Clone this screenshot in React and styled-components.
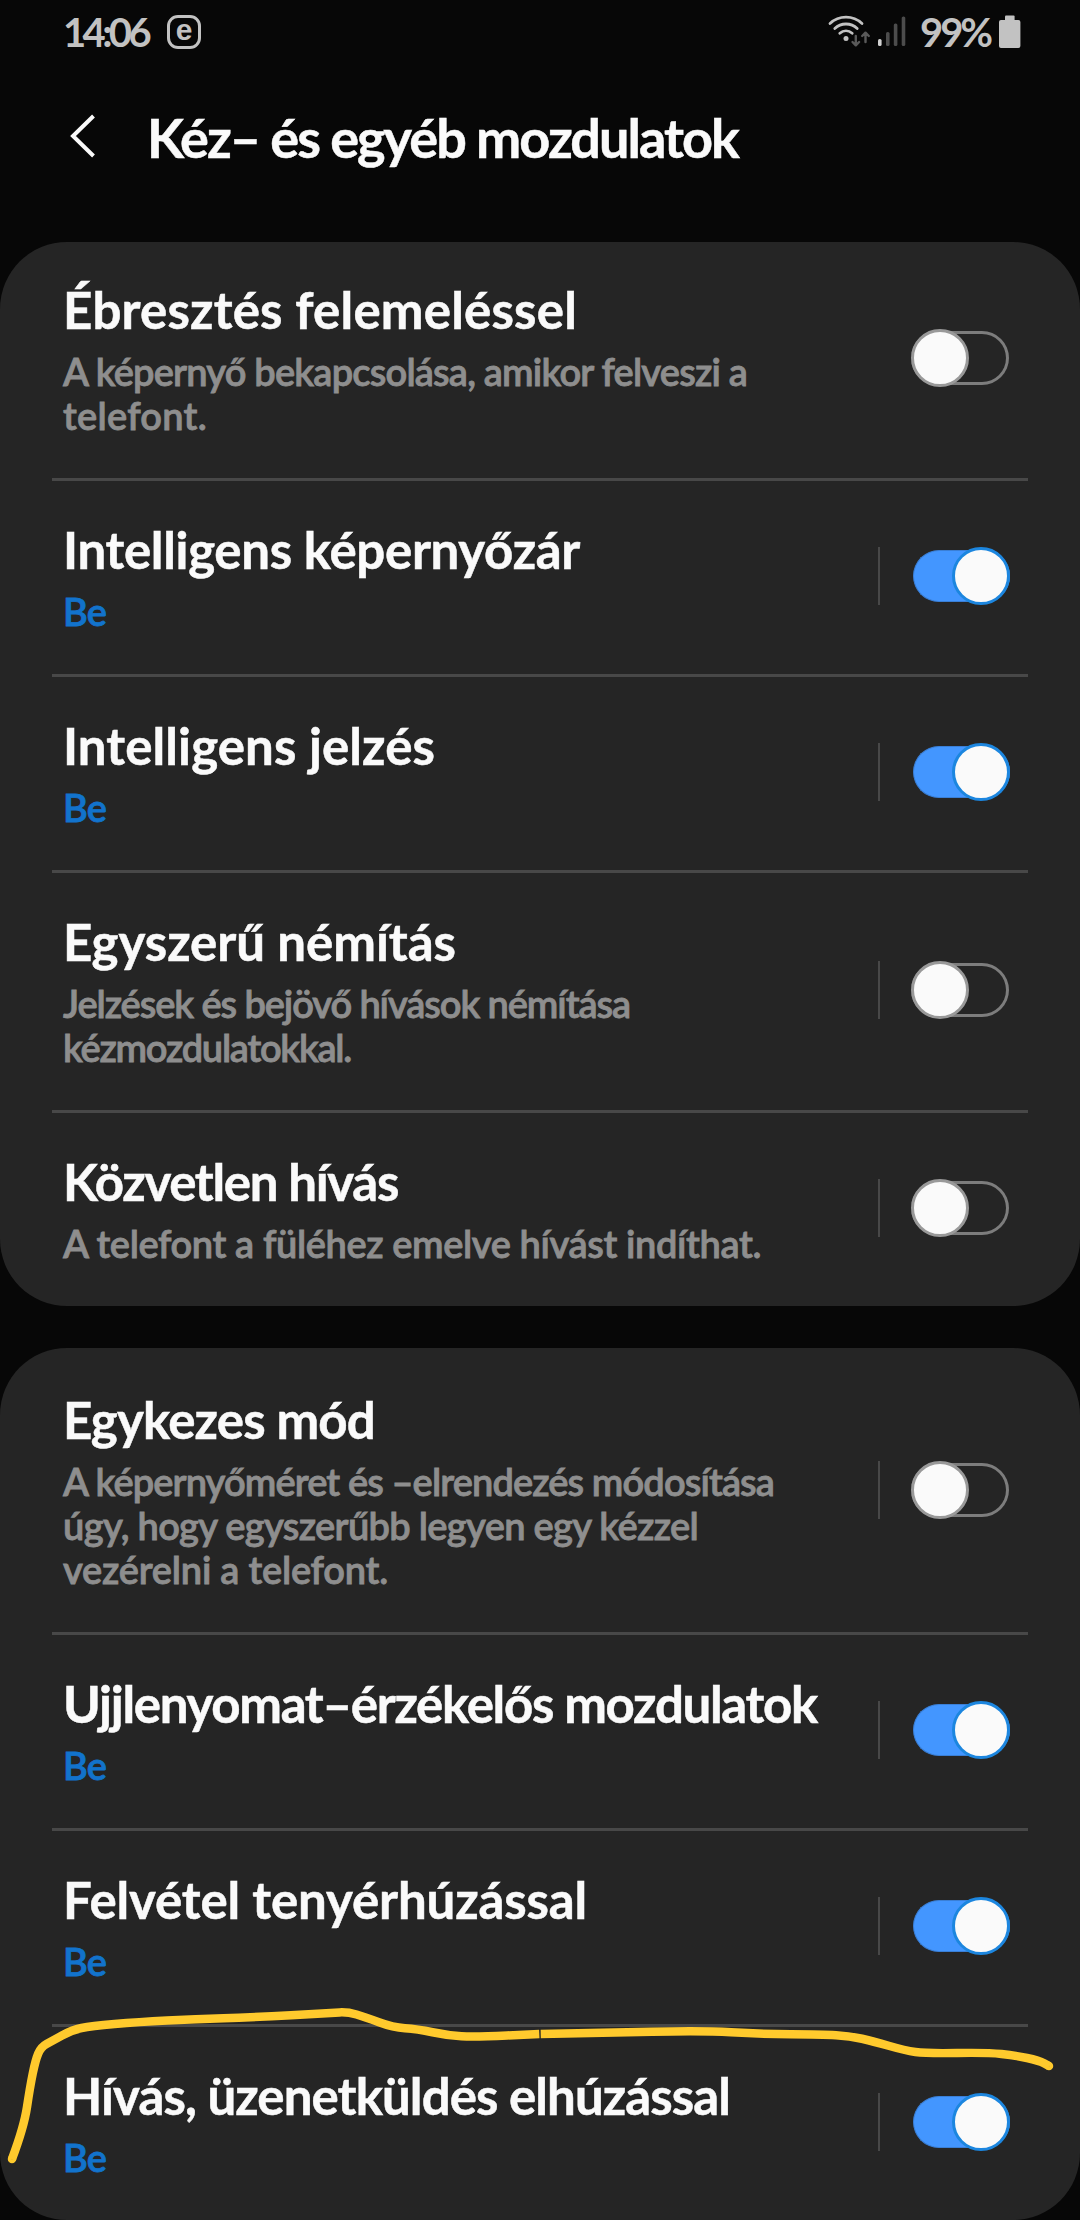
import React, { useLayoutEffect, useRef, useState } from 'react';
import styled, { createGlobalStyle } from 'styled-components';

const GlobalStyle = createGlobalStyle`
  * {
    box-sizing: border-box;
  }

  body {
    margin: 0;
    background: #070707;
    font-family: 'Lato', 'Open Sans', sans-serif;
  }
`;

const Screen = styled.div`
  position: relative;
  width: 1080px;
  height: 2220px;
  overflow: hidden;
  background: #070707;
  color: #fafafa;
`;

const StatusBar = styled.div`
  display: flex;
  align-items: center;
  justify-content: space-between;
  height: 64px;
  padding: 0 59px 0 63px;
  color: #c2c2c2;
`;

const StatusGroup = styled.div`
  display: flex;
  align-items: center;
`;

const NetworkIcons = styled.div`
  display: flex;
  align-items: center;
  gap: 6px;
  margin-right: 14px;
`;

const StatusText = styled.span`
  width: ${({ $width }) => $width}px;
  font-size: 40px;
  font-weight: 700;
  line-height: 41px;
  white-space: nowrap;
`;

const AppBadge = styled.span`
  display: flex;
  align-items: center;
  justify-content: center;
  width: 34px;
  height: 34px;
  margin-left: 17px;
  padding-bottom: 5px;
  border: 3px solid #c2c2c2;
  border-radius: 11px;
  font-family: 'Liberation Sans', sans-serif;
  font-size: 30px;
  font-weight: 700;
  line-height: 28px;
`;

const Header = styled.header`
  display: flex;
  align-items: center;
  height: 178px;
  padding: 0 0 34px 69px;
`;

const HeaderTitle = styled.h1`
  margin: 3px 0 0 48px;
  font-size: 54px;
  font-weight: 700;
  line-height: 64px;
  -webkit-text-stroke: 0.5px currentColor;
`;

const CardList = styled.main`
  display: flex;
  flex-direction: column;
  gap: 42px;
`;

const Card = styled.section`
  overflow: hidden;
  border-radius: 67px;
  background: #252525;
`;

const Row = styled.div`
  display: flex;
  align-items: center;
  justify-content: space-between;
  margin: ${({ $tucked }) => ($tucked ? '-4px' : '0')} 52px 0;
  padding: 0 18px 0 11px;
  border-top: 3px solid transparent;

  & + & {
    border-top-color: #484848;
  }
`;

const RowText = styled.div`
  padding: 39px 0 41px;
`;

const RowTitle = styled.h2`
  margin: 0 0 9px;
  font-size: 51px;
  font-weight: 700;
  line-height: 60px;
  -webkit-text-stroke: 0.5px currentColor;
`;

const RowSummary = styled.p`
  margin: 0;
  color: ${({ $active }) => ($active ? '#1273cc' : '#8e8e8e')};
  font-size: 38px;
  font-weight: 600;
  line-height: 44px;
  -webkit-text-stroke: 0.8px currentColor;
`;

const Line = styled.span`
  display: block;
  width: max-content;
  white-space: nowrap;
`;

const Controls = styled.div`
  display: flex;
  align-items: center;
  gap: 31px;
  margin-top: -3px;
`;

const Divider = styled.span`
  width: 2px;
  height: 58px;
  background: #484848;
`;

const Switch = styled.button`
  display: flex;
  align-items: center;
  justify-content: ${({ $on }) => ($on ? 'flex-end' : 'flex-start')};
  width: ${({ $on }) => ($on ? 97 : 98)}px;
  height: ${({ $on }) => ($on ? 52 : 54)}px;
  margin: 0 ${({ $on }) => ($on ? '0 0 2px' : '1px 0 0')};
  padding: 0;
  border: ${({ $on }) => ($on ? '1px solid #3a7fd6' : '3px solid #7d7d7d')};
  border-right-width: ${({ $on }) => ($on ? 0 : 3)}px;
  border-left-width: ${({ $on }) => ($on ? 1 : 0)}px;
  border-radius: 27px;
  background: ${({ $on }) => ($on ? '#4396ff' : 'transparent')};
`;

const Knob = styled.span`
  flex: none;
  width: 58px;
  height: 58px;
  border: 3px solid ${({ $on }) => ($on ? '#1c86df' : '#999999')};
  border-radius: 50%;
  background: #fafafa;
`;

const Marker = styled.svg`
  position: absolute;
  left: 0;
  top: 2000px;
  pointer-events: none;
`;

// Tracks a line of text out so that it takes the given width.
const FitLine = ({ text, width }) => {
  const ref = useRef(null);
  const [spacing, setSpacing] = useState(0);

  useLayoutEffect(() => {
    const natural = ref.current.getBoundingClientRect().width;
    setSpacing((width - natural) / text.length);
  }, [text, width]);

  return (
    <Line ref={ref} style={{ letterSpacing: spacing }}>
      {text}
    </Line>
  );
};

const WifiIcon = () => (
  <svg width="44" height="34" viewBox="0 0 44 34" fill="none" strokeLinecap="round">
    <g stroke="#c2c2c2" strokeWidth="2.8">
      <path d="M2 8.5C11 0 25 0 34 8.5" />
      <path d="M6.8 13.5C13 7.5 23 7.5 29.2 13.5" />
      <path d="M11.8 18.3C15.5 15 20.5 15 24.2 18.3" />
    </g>
    <circle cx="18" cy="23.4" r="2.5" fill="#c2c2c2" />
    <g stroke="#5a5a5a" strokeWidth="2.4" strokeLinejoin="round">
      <path d="M27.8 21v9M24.5 27l3.3 3.3 3.3-3.3" />
      <path d="M37.5 27v-9M34.2 21l3.3-3.3 3.3 3.3" />
    </g>
  </svg>
);

const SignalIcon = () => (
  <svg width="28" height="34" viewBox="0 0 28 34">
    <rect x="0" y="24" width="3.6" height="7" rx="1.6" fill="#d2d2d2" />
    <g fill="#4c4c4c">
      <rect x="8" y="17" width="3.6" height="14" rx="1.6" />
      <rect x="15.8" y="8.5" width="3.6" height="22.5" rx="1.6" />
      <rect x="23.7" y="1.5" width="3.6" height="29.5" rx="1.6" />
    </g>
  </svg>
);

const BatteryIcon = () => (
  <svg width="22" height="34" viewBox="0 0 22 34" fill="#c2c2c2">
    <rect x="6" y="0.5" width="9.6" height="8" rx="1" />
    <rect x="0" y="5" width="21.4" height="28" rx="2" />
  </svg>
);

const BackIcon = () => (
  <svg width="30" height="46" viewBox="0 0 30 46" fill="none">
    <path d="M24.5 3L4 23l20.5 20" stroke="#fafafa" strokeWidth="4" />
  </svg>
);

const leftStroke = [
  [12, 159], [24, 127], [30, 87], [35.5, 60], [41, 47], [52, 41], [72, 30], [91, 26],
  [138, 22], [196, 19], [251, 17.5], [331, 12.8], [348, 12], [365, 17], [393, 27.5],
  [417, 29], [448, 35.5], [475, 37], [539.3, 34],
];

const rightStroke = [
  [540.7, 34], [602, 33], [702, 30.5], [760, 34], [822, 34.3], [850, 36], [874, 41.5],
  [905, 50.5], [926, 53.5], [988, 52.5], [1015, 55.5], [1039, 60.5], [1049, 66],
];

// Runs a curve through the midpoints of the points.
const toPath = (points) => {
  let d = `M${points[0].join(' ')}`;
  for (let i = 1; i < points.length - 1; i += 1) {
    const [x, y] = points[i];
    const [nx, ny] = points[i + 1];
    d += `Q${x} ${y} ${(x + nx) / 2} ${(y + ny) / 2}`;
  }
  return `${d}L${points[points.length - 1].join(' ')}`;
};

const groups = [
  [
    {
      title: 'Ébresztés felemeléssel',
      width: 514,
      tucked: true,
      plain: true,
      lines: [
        ['A képernyő bekapcsolása, amikor felveszi a', 684],
        ['telefont.', 144],
      ],
    },
    { title: 'Intelligens képernyőzár', width: 517, on: true },
    { title: 'Intelligens jelzés', width: 372, on: true },
    {
      title: 'Egyszerű némítás',
      width: 393,
      lines: [
        ['Jelzések és bejövő hívások némítása', 567],
        ['kézmozdulatokkal.', 288],
      ],
    },
    {
      title: 'Közvetlen hívás',
      width: 335,
      lines: [['A telefont a füléhez emelve hívást indíthat.', 698]],
    },
  ],
  [
    {
      title: 'Egykezes mód',
      width: 312,
      lines: [
        ['A képernyőméret és –elrendezés módosítása', 711],
        ['úgy, hogy egyszerűbb legyen egy kézzel', 635],
        ['vezérelni a telefont.', 325],
      ],
    },
    { title: 'Ujjlenyomat–érzékelős mozdulatok', width: 754, on: true },
    { title: 'Felvétel tenyérhúzással', width: 524, on: true },
    { title: 'Hívás, üzenetküldés elhúzással', width: 667, on: true },
  ],
];

const SettingRow = ({ title, width, on = false, plain, tucked, lines = [['Be', 43]] }) => (
  <Row $tucked={tucked}>
    <RowText>
      <RowTitle>
        <FitLine text={title} width={width} />
      </RowTitle>
      <RowSummary $active={on}>
        {lines.map(([text, lineWidth]) => (
          <FitLine key={text} text={text} width={lineWidth} />
        ))}
      </RowSummary>
    </RowText>
    <Controls>
      {!plain && <Divider />}
      <Switch $on={on} role="switch" aria-checked={on} aria-label={title}>
        <Knob $on={on} />
      </Switch>
    </Controls>
  </Row>
);

const App = () => (
  <Screen>
    <GlobalStyle />
    <StatusBar>
      <StatusGroup>
        <StatusText $width={87}>
          <FitLine text="14:06" width={85} />
        </StatusText>
        <AppBadge>e</AppBadge>
      </StatusGroup>
      <StatusGroup>
        <NetworkIcons>
          <WifiIcon />
          <SignalIcon />
        </NetworkIcons>
        <StatusText $width={79}>
          <FitLine text="99%" width={70} />
        </StatusText>
        <BatteryIcon />
      </StatusGroup>
    </StatusBar>
    <Header>
      <BackIcon />
      <HeaderTitle>
        <FitLine text="Kéz– és egyéb mozdulatok" width={591} />
      </HeaderTitle>
    </Header>
    <CardList>
      {groups.map((rows, index) => (
        <Card key={index}>
          {rows.map((row) => (
            <SettingRow key={row.title} {...row} />
          ))}
        </Card>
      ))}
    </CardList>
    <Marker width="1080" height="200" viewBox="0 0 1080 200" fill="none" stroke="#ffca2d" strokeWidth="8.5" strokeLinejoin="round">
      <path d={toPath(leftStroke)} />
      <path d={toPath(rightStroke)} />
      <circle cx="12" cy="159" r="2" strokeWidth="4.5" />
      <circle cx="1049" cy="66" r="2" strokeWidth="4.5" />
    </Marker>
  </Screen>
);

export default App;
